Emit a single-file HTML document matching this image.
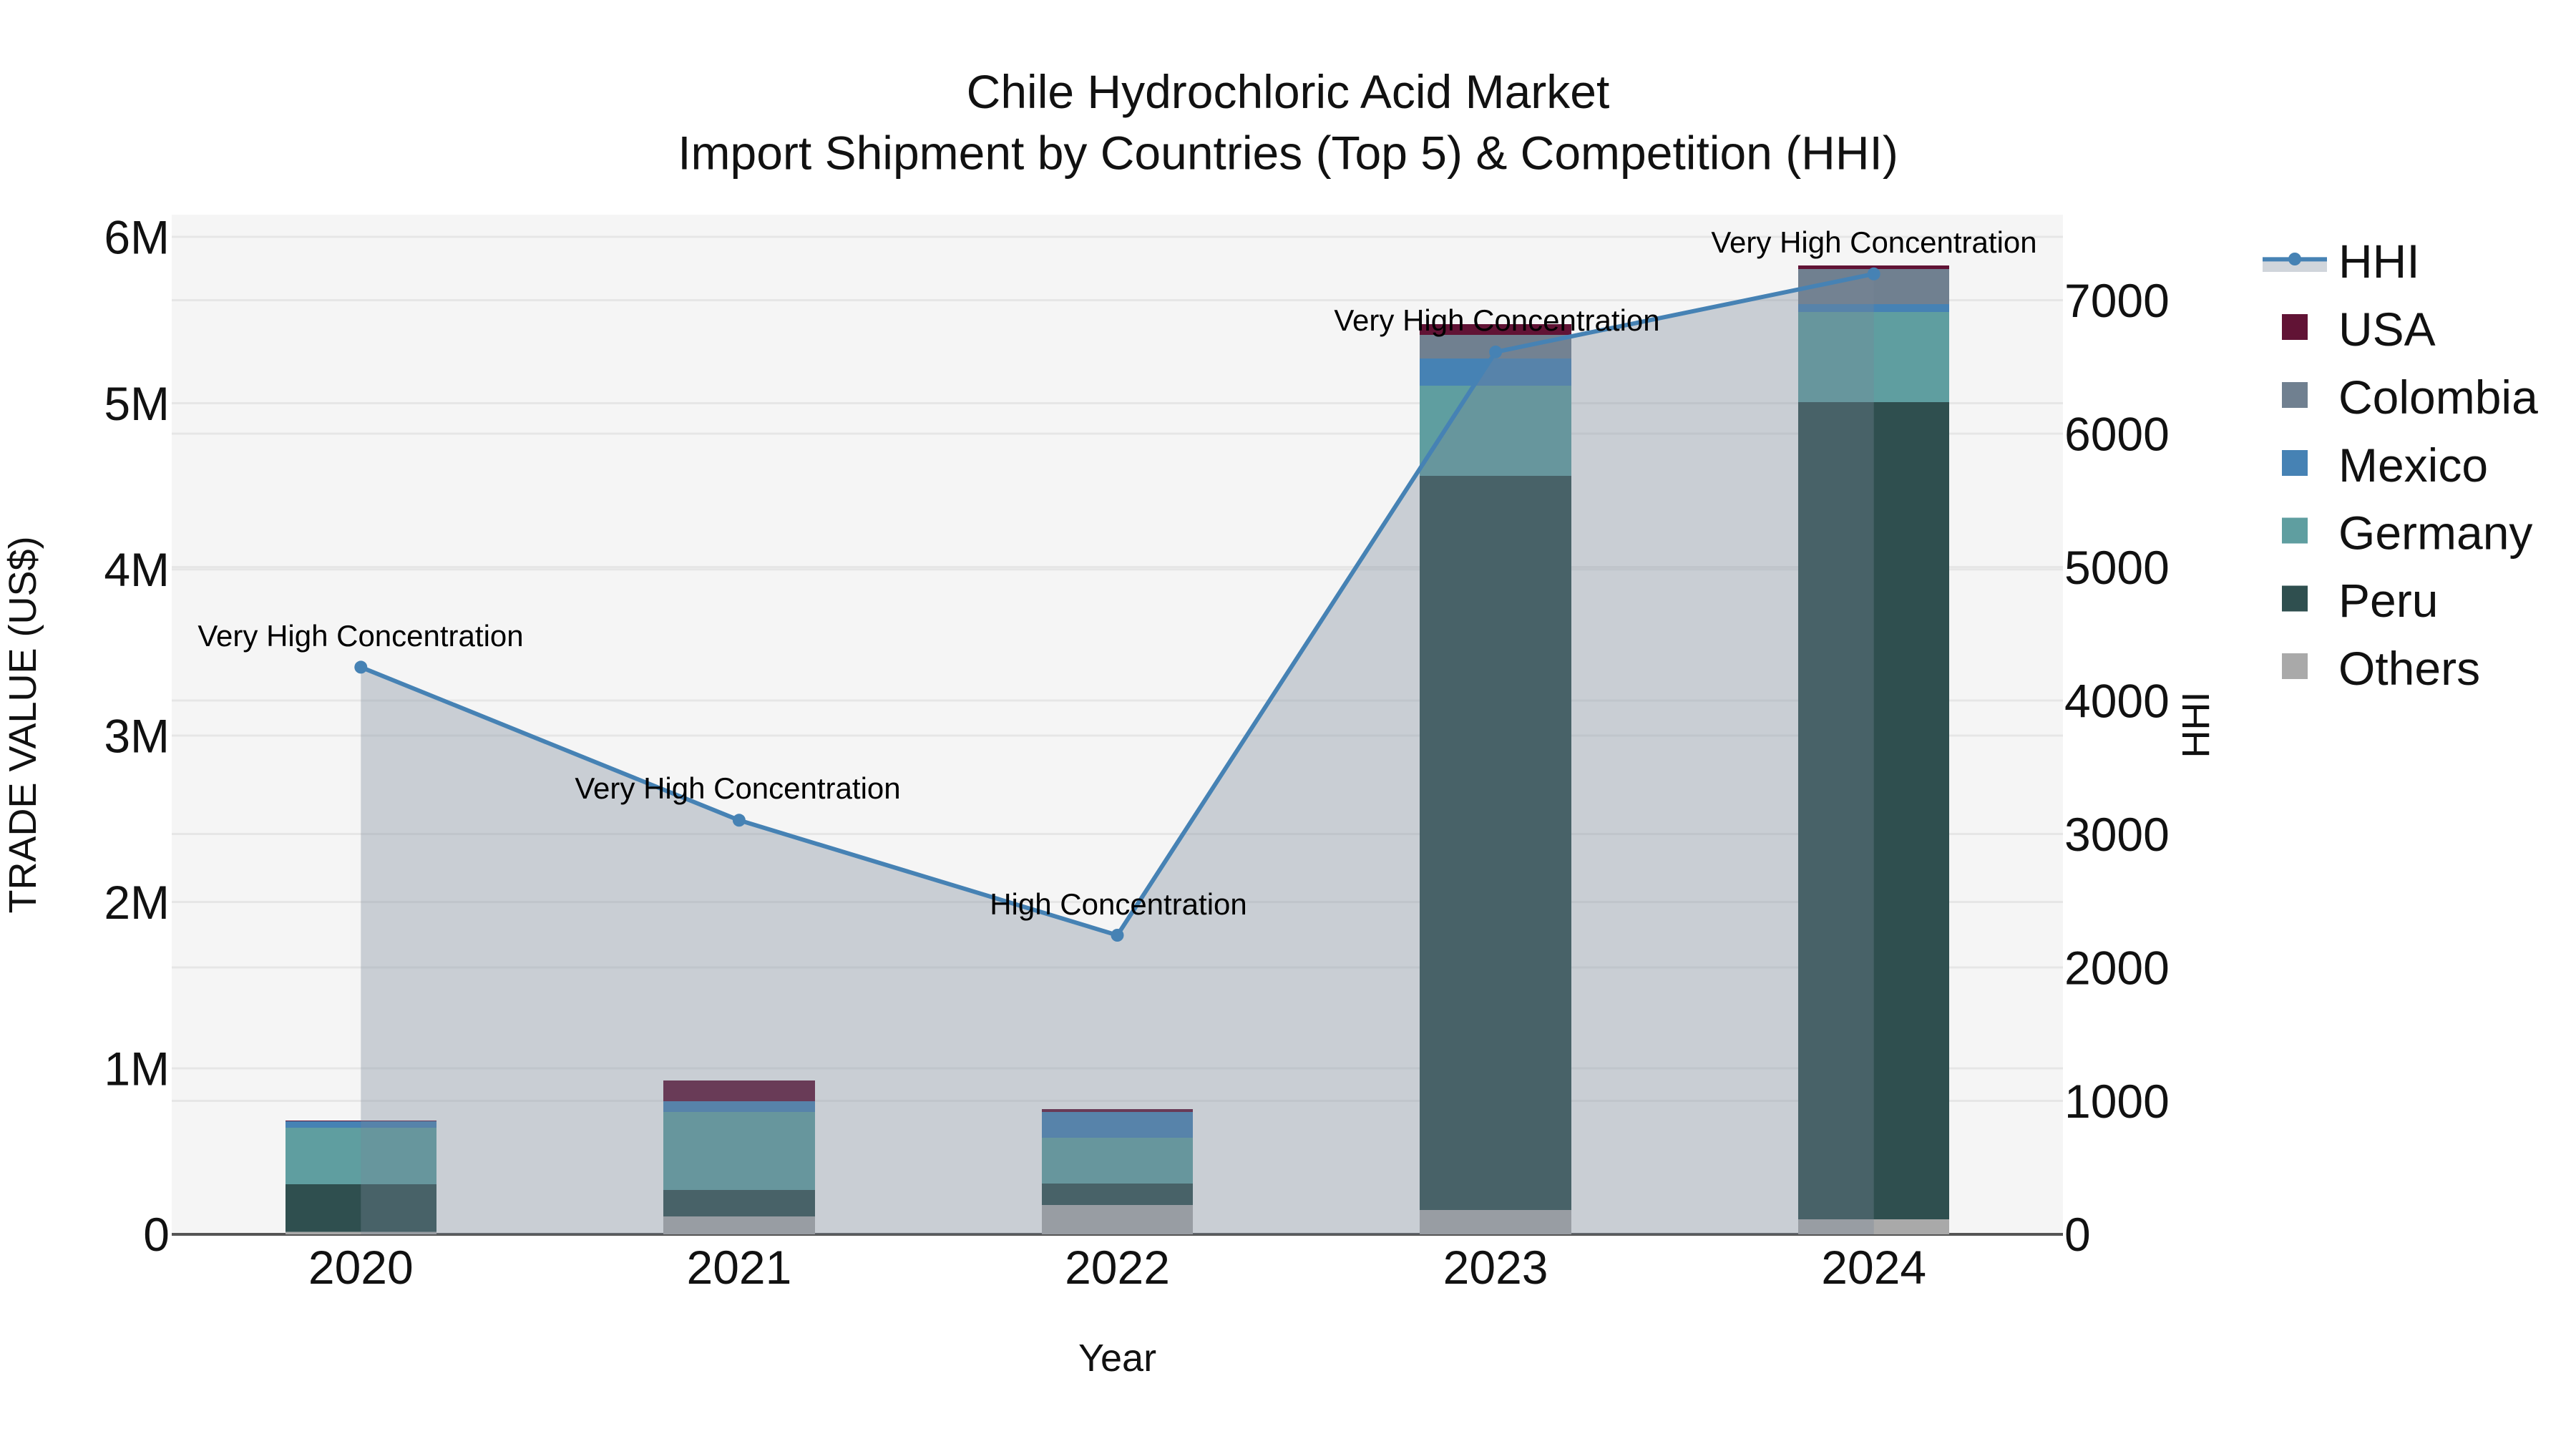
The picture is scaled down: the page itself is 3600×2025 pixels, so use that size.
<!DOCTYPE html>
<html>
<head>
<meta charset="utf-8">
<style>
html,body{margin:0;padding:0;background:#fff;width:3600px;height:2025px;overflow:hidden}
svg{display:block}
text{font-family:"Liberation Sans",sans-serif;fill:#111}
.t{font-size:66px}
.a{font-size:42px;fill:#000;text-anchor:middle}
.at{font-size:54px}
.m{text-anchor:middle}
.e{text-anchor:end}
</style>
</head>
<body>
<svg width="3600" height="2025" viewBox="0 0 3600 2025" xmlns="http://www.w3.org/2000/svg">
<rect width="3600" height="2025" fill="#fff"/>
<rect x="240" y="300" width="2643" height="1425" fill="#f5f5f5"/>
<g stroke="#e6e6e6" stroke-width="3">
<path d="M240 331H2883M240 563.5H2883M240 795.8H2883M240 1028H2883M240 1260.5H2883M240 1493H2883"/>
<path d="M240 419.5H2883M240 606H2883M240 792.5H2883M240 979H2883M240 1165.5H2883M240 1352H2883M240 1538.5H2883"/>
</g>
<path d="M240 1725H2883" stroke="#555" stroke-width="4"/>

<!-- 2020 -->
<g>
<rect x="399" y="1566" width="211" height="1" fill="#611335"/>
<rect x="399" y="1567" width="211" height="9" fill="#4682b4"/>
<rect x="399" y="1576" width="211" height="79" fill="#5f9ea0"/>
<rect x="399" y="1655" width="211" height="66.7" fill="#2f4f4f"/>
<rect x="399" y="1721.7" width="211" height="3.3" fill="#a9a9a9"/>
</g>
<!-- 2021 -->
<g>
<rect x="927" y="1510" width="212" height="29" fill="#611335"/>
<rect x="927" y="1539" width="212" height="15" fill="#4682b4"/>
<rect x="927" y="1554" width="212" height="109" fill="#5f9ea0"/>
<rect x="927" y="1663" width="212" height="37" fill="#2f4f4f"/>
<rect x="927" y="1700" width="212" height="25" fill="#a9a9a9"/>
</g>
<!-- 2022 -->
<g>
<rect x="1456" y="1550" width="211" height="4" fill="#611335"/>
<rect x="1456" y="1554" width="211" height="36" fill="#4682b4"/>
<rect x="1456" y="1590" width="211" height="64" fill="#5f9ea0"/>
<rect x="1456" y="1654" width="211" height="30" fill="#2f4f4f"/>
<rect x="1456" y="1684" width="211" height="41" fill="#a9a9a9"/>
</g>
<!-- 2023 -->
<g>
<rect x="1984" y="453" width="212" height="15" fill="#611335"/>
<rect x="1984" y="468" width="212" height="33" fill="#708090"/>
<rect x="1984" y="501" width="212" height="38" fill="#4682b4"/>
<rect x="1984" y="539" width="212" height="126" fill="#5f9ea0"/>
<rect x="1984" y="665" width="212" height="1026" fill="#2f4f4f"/>
<rect x="1984" y="1691" width="212" height="34" fill="#a9a9a9"/>
</g>
<!-- 2024 -->
<g>
<rect x="2513" y="371" width="211" height="5" fill="#611335"/>
<rect x="2513" y="376" width="211" height="49" fill="#708090"/>
<rect x="2513" y="425" width="211" height="11" fill="#4682b4"/>
<rect x="2513" y="436" width="211" height="126" fill="#5f9ea0"/>
<rect x="2513" y="562" width="211" height="1142" fill="#2f4f4f"/>
<rect x="2513" y="1704" width="211" height="21" fill="#a9a9a9"/>
</g>

<!-- HHI -->
<path d="M504.3 932.4L1032.9 1146.3L1561.5 1307L2090.1 491.9L2618.7 382.8V1725H504.3Z" fill="#778899" fill-opacity=".35"/>
<path d="M504.3 932.4L1032.9 1146.3L1561.5 1307L2090.1 491.9L2618.7 382.8" fill="none" stroke="#4682b4" stroke-width="6" stroke-linejoin="round"/>
<g fill="#4682b4">
<circle cx="504.3" cy="932.4" r="9"/>
<circle cx="1032.9" cy="1146.3" r="9"/>
<circle cx="1561.5" cy="1307" r="9"/>
<circle cx="2090.1" cy="491.9" r="9"/>
<circle cx="2618.7" cy="382.8" r="9"/>
</g>

<text class="a" x="504" y="903">Very High Concentration</text>
<text class="a" x="1031" y="1116">Very High Concentration</text>
<text class="a" x="1563" y="1278">High Concentration</text>
<text class="a" x="2092" y="462">Very High Concentration</text>
<text class="a" x="2619" y="353">Very High Concentration</text>

<!-- title -->
<text class="t m" x="1800" y="151">Chile Hydrochloric Acid Market</text>
<text class="t m" x="1800" y="236.5">Import Shipment by Countries (Top 5) &amp; Competition (HHI)</text>

<!-- left ticks -->
<g class="t">
<text class="t e" x="237" y="354.5">6M</text>
<text class="t e" x="237" y="587">5M</text>
<text class="t e" x="237" y="819">4M</text>
<text class="t e" x="237" y="1051.5">3M</text>
<text class="t e" x="237" y="1284">2M</text>
<text class="t e" x="237" y="1516.5">1M</text>
<text class="t e" x="237" y="1748">0</text>
</g>
<!-- right ticks -->
<text class="t" x="2885" y="443">7000</text>
<text class="t" x="2885" y="629.5">6000</text>
<text class="t" x="2885" y="816">5000</text>
<text class="t" x="2885" y="1002.5">4000</text>
<text class="t" x="2885" y="1189">3000</text>
<text class="t" x="2885" y="1375.5">2000</text>
<text class="t" x="2885" y="1562">1000</text>
<text class="t" x="2885" y="1748">0</text>
<!-- x ticks -->
<text class="t m" x="504.3" y="1794">2020</text>
<text class="t m" x="1032.9" y="1794">2021</text>
<text class="t m" x="1561.5" y="1794">2022</text>
<text class="t m" x="2090.1" y="1794">2023</text>
<text class="t m" x="2618.7" y="1794">2024</text>

<!-- axis titles -->
<text class="at m" x="1561.5" y="1916">Year</text>
<text class="at m" transform="translate(50 1013) rotate(-90)">TRADE VALUE (US$)</text>
<text class="at m" transform="translate(3087 1013) rotate(-90)">HHI</text>

<!-- legend -->
<rect x="3162" y="362" width="90" height="18" fill="#778899" fill-opacity=".35"/>
<path d="M3162 362.4H3252" stroke="#4682b4" stroke-width="6"/>
<circle cx="3207" cy="362" r="9" fill="#4682b4"/>
<rect x="3189" y="439" width="36" height="36" fill="#611335"/>
<rect x="3189" y="534" width="36" height="36" fill="#708090"/>
<rect x="3189" y="629" width="36" height="36" fill="#4682b4"/>
<rect x="3189" y="723.5" width="36" height="36" fill="#5f9ea0"/>
<rect x="3189" y="818.5" width="36" height="36" fill="#2f4f4f"/>
<rect x="3189" y="913" width="36" height="36" fill="#a9a9a9"/>
<text class="t" x="3268" y="388">HHI</text>
<text class="t" x="3268" y="483">USA</text>
<text class="t" x="3268" y="578">Colombia</text>
<text class="t" x="3268" y="673">Mexico</text>
<text class="t" x="3268" y="767.5">Germany</text>
<text class="t" x="3268" y="862">Peru</text>
<text class="t" x="3268" y="957">Others</text>
</svg>
</body>
</html>
